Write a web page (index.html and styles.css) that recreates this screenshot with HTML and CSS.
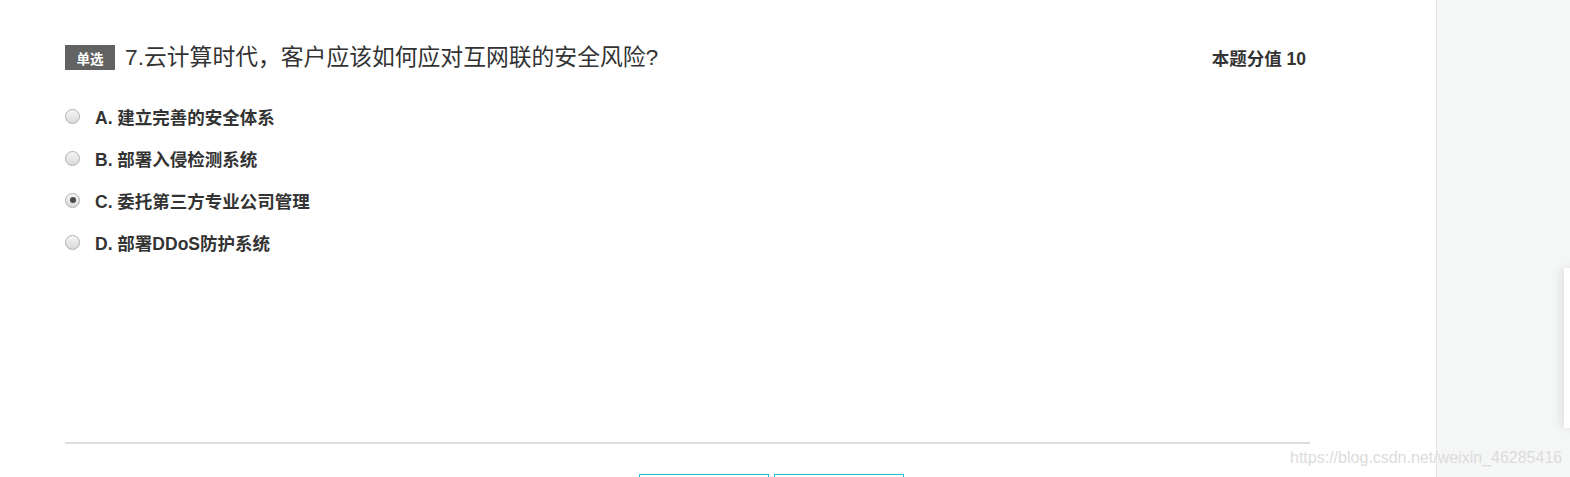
FILE: index.html
```html
<!DOCTYPE html>
<html lang="zh-CN">
<head>
<meta charset="utf-8">
<title>单选题</title>
<link rel="stylesheet" href="styles.css">
</head>
<body>
<div class="page">
  <main class="main">
    <div class="content">
      <div class="title-row">
        <div class="title-left">
          <span class="badge">单选</span>
          <span class="question">7.云计算时代，客户应该如何应对互网联的安全风险?</span>
        </div>
        <span class="score">本题分值 10</span>
      </div>
      <ul class="options">
        <li class="option"><span class="radio"></span><span class="label">A. 建立完善的安全体系</span></li>
        <li class="option"><span class="radio"></span><span class="label">B. 部署入侵检测系统</span></li>
        <li class="option"><span class="radio checked"></span><span class="label">C. 委托第三方专业公司管理</span></li>
        <li class="option"><span class="radio"></span><span class="label">D. 部署DDoS防护系统</span></li>
      </ul>
      <div class="divider"></div>
      <div class="buttons">
        <button class="btn" type="button"></button>
        <button class="btn" type="button"></button>
      </div>
    </div>
  </main>
  <aside class="side">
    <div class="side-card"></div>
  </aside>
  <div class="watermark">https://blog.csdn.net/weixin_46285416</div>
</div>
</body>
</html>
```
FILE: styles.css
```css
html, body {
  margin: 0;
  padding: 0;
  background: #ffffff;
  overflow: hidden;
}
body {
  font-family: "Liberation Sans", Arial, "Noto Sans CJK SC", sans-serif;
  color: #333333;
}
.page {
  display: flex;
  width: 1570px;
  height: 477px;
  position: relative;
  overflow: hidden;
}
.main {
  width: 1436px;
  border-right: 1px solid #e4e6e6;
  background: #ffffff;
  flex: none;
}
.content {
  width: 1245px;
  margin-left: 65px;
  padding-top: 45px;
}
.title-row {
  display: flex;
  justify-content: space-between;
  align-items: center;
  height: 25px;
}
.title-left {
  display: flex;
  align-items: center;
}
.badge {
  display: inline-flex;
  align-items: center;
  justify-content: center;
  width: 50px;
  height: 25px;
  background: #626262;
  color: #ffffff;
  font-size: 13.5px;
  font-weight: bold;
}
.question {
  margin-left: 10px;
  font-size: 22.8px;
  line-height: 25px;
  color: #333333;
}
.score {
  margin-right: 4px;
  font-size: 17.5px;
  font-weight: bold;
  color: #333333;
}
.options {
  list-style: none;
  margin: 25px 0 0 0;
  padding: 0;
}
.option {
  display: flex;
  align-items: center;
  height: 42px;
}
.radio {
  box-sizing: border-box;
  width: 15px;
  height: 15px;
  border-radius: 50%;
  border: 1px solid #b0b0b0;
  background: linear-gradient(#f6f6f6, #d9d9d9);
  display: inline-flex;
  align-items: center;
  justify-content: center;
  flex: none;
}
.radio.checked::after {
  content: "";
  width: 6px;
  height: 6px;
  border-radius: 50%;
  background: #4a4a4a;
}
.label {
  margin-left: 15px;
  font-size: 17.5px;
  font-weight: bold;
  color: #333333;
}
.divider {
  margin-top: 179px;
  height: 2px;
  background: #dddddd;
}
.buttons {
  display: flex;
  gap: 5px;
  margin-top: 30px;
  padding-left: 574px;
}
.btn {
  width: 130px;
  height: 40px;
  border: 1px solid #13c3da;
  border-radius: 0;
  background: #ffffff;
  padding: 0;
}
.side {
  flex: 1;
  background: #f5f6f6;
  position: relative;
}
.side-card {
  position: absolute;
  left: 127px;
  top: 268px;
  width: 20px;
  height: 160px;
  background: #ffffff;
  box-shadow: -4px 0 8px rgba(0, 0, 0, 0.08);
}
.watermark {
  position: absolute;
  left: 1290px;
  top: 448px;
  font-size: 16px;
  line-height: 20px;
  color: #dcdcdc;
  white-space: nowrap;
}
```
